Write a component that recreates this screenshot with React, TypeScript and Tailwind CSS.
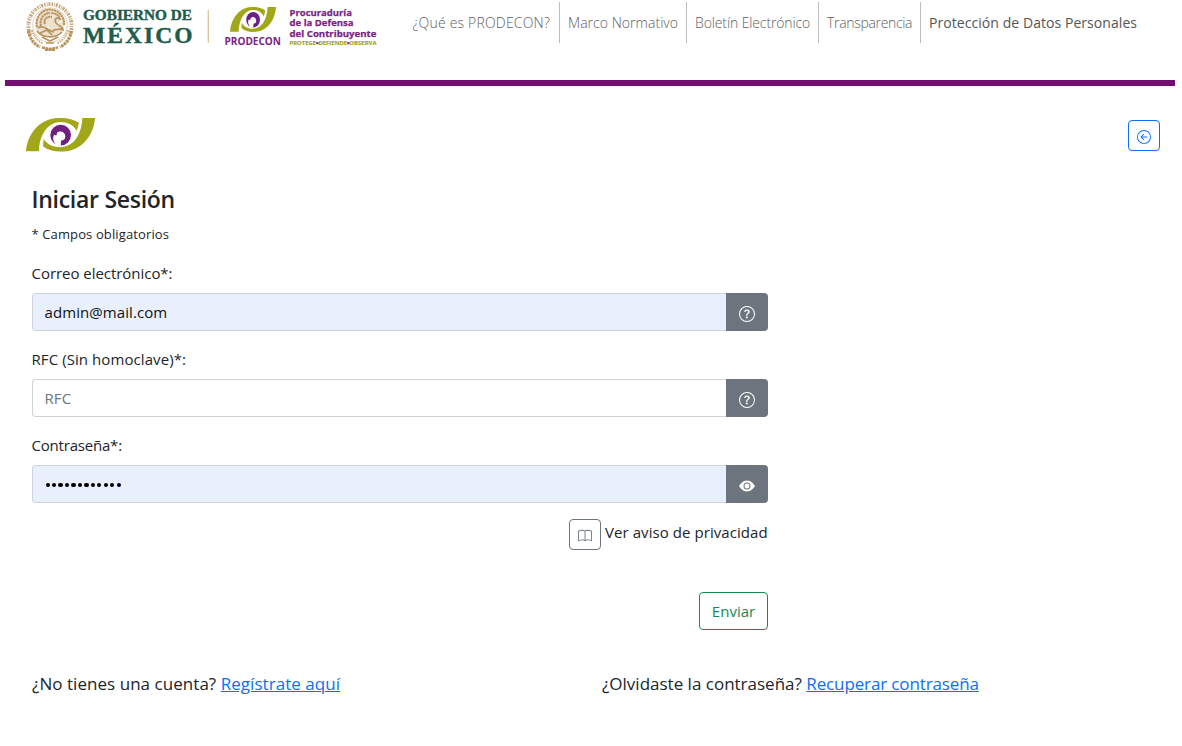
import React from "react";
import { BsArrowLeftCircle, BsBook, BsEyeFill, BsQuestionCircle } from "react-icons/bs";

function EyeMark({ className }: { className?: string }) {
  return (
    <svg viewBox="78 54 207 100" preserveAspectRatio="none" className={className}>
      <g fill="#a2a619">
        <path d="M78 153C80 125 92 96 117 75C137 59 158 54 182 54C205 54 222 59 237 68L230 93C222 76 203 65 180 66C140 68 118 108 117 153Z" />
        <path d="M247 54H285C283 86 268 115 246 133C227 148 206 154 182 154C161 154 143 149 129 138L131 116C140 132 158 141 180 141C222 141 245 102 247 54Z" />
      </g>
      <circle cx="182" cy="105" r="31" fill="#6f1f80" />
      <path d="M172 136C160 128 156 113 163 103C164 106 168 107 171 103C169 100 171 97 176 95C186 91 196 99 196 109C196 117 190 122 182 121L183 137Z" fill="#fff" />
      <path d="M172 119C176 123 180 121 183 121V128C178 128 173 124 172 119Z" fill="#fff" />
    </svg>
  );
}

function Seal() {
  return (
    <svg viewBox="0 0 50 50" className="absolute left-[25px] top-[1px] h-[50px] w-[50px]" fill="none" stroke="#b8925a">
      <path d="M5.5 34A21.6 21.6 0 1 1 44.5 34" strokeWidth="3.8" strokeDasharray="1.5 1.1 .8 .9 2 1.2" opacity=".8" />
      <path d="M3.5 30C5 38 9 43 15 46M46.500 30C45 38 41 43 35 46" strokeWidth="3.2" strokeDasharray="2.600 .7" />
      <path d="M7 29C9 36 13 40 18 42.500M43 29C41 36 37 40 32 42.500" strokeWidth="2" strokeDasharray="1.800 .8" opacity=".7" />
      <path d="M17 46.500L25 48L33 46.500M20 49H30" strokeWidth="2.400" strokeDasharray="3 .5" />
      <circle cx="25" cy="24" r="17.200" strokeWidth=".7" opacity=".6" />
      <path d="M10.500 27C9 17 14 9.500 23 8C33 7 40 14 40 23C39 31 34 36 27 36C18 37 12 34 10.500 27Z" fill="#d5bc91" stroke="none" opacity=".45" />
      <path d="M12 26C10 16 17 8.500 25 8.500C34 9 40 16 39 24M16 25C14 18 19 12 25 12M20 23C18 18 22 15 27 16" strokeWidth="2" strokeDasharray="2.400 .5" />
      <path d="M26 12C31 12 35 15 35 18C31 16 29 18 31 22C34 25 38 26 38 29C35 27 32 29 28 29M13 27C18 23 23 30 29 31M15 32L22 29L27 34M12 30C17 37 30 38 37 31M17 36L25 40L33 36M21 42H29" strokeWidth="1.700" />
      <path d="M27 15H29M33 22L37 20M22 26L25 27" stroke="#fff" strokeWidth="1.200" />
    </svg>
  );
}

function Brand() {
  return (
    <div className="relative h-[56px] w-[404px] shrink-0">
      <Seal />
      <svg viewBox="0 0 404 56" className="h-[56px] w-[404px]">
        <g fill="#1f5c4d" stroke="#1f5c4d" strokeWidth=".4" fontFamily="Liberation Serif, serif" fontWeight="700">
          <text x="83" y="20.3" fontSize="14.5" textLength="109" lengthAdjust="spacingAndGlyphs">GOBIERNO DE</text>
          <text x="83" y="43.2" fontSize="23.5" textLength="109.5" lengthAdjust="spacing">MÉXICO</text>
        </g>
        <path d="M208.3 10V43" stroke="#dcc398" strokeWidth="1.3" />
        <g fill="#7b2382" fontFamily="Open Sans, sans-serif" fontWeight="700">
          <text x="224.5" y="45" fontSize="10" textLength="56.5" lengthAdjust="spacingAndGlyphs">PRODECON</text>
          <g stroke="#7b2382" strokeWidth=".25">
            <text x="289.5" y="15.6" fontSize="9.6" textLength="62.5" lengthAdjust="spacingAndGlyphs">Procuraduría</text>
            <text x="289.5" y="26.4" fontSize="9.6" textLength="64" lengthAdjust="spacingAndGlyphs">de la Defensa</text>
            <text x="289.5" y="37.2" fontSize="9.6" textLength="87" lengthAdjust="spacingAndGlyphs">del Contribuyente</text>
          </g>
        </g>
        <text x="289.5" y="45.4" fontSize="5.6" fontFamily="Open Sans, sans-serif" fontWeight="700" fill="#a2a619" stroke="#a2a619" strokeWidth=".15" textLength="87" lengthAdjust="spacingAndGlyphs">
          PROTEGE<tspan fill="#7b2382" stroke="#7b2382" strokeWidth=".7">•</tspan>DEFIENDE<tspan fill="#7b2382" stroke="#7b2382" strokeWidth=".7">•</tspan>OBSERVA
        </text>
      </svg>
      <EyeMark className="absolute left-[230px] top-[7px] h-[25px] w-[46px]" />
    </div>
  );
}

function NavItem({ className, children }: { className: string; children: React.ReactNode }) {
  return (
    <a className={`flex h-[41px] shrink-0 items-center whitespace-nowrap pl-2 ${className}`}>
      {children}
    </a>
  );
}

const light = "border-r border-[#bdbdbd] font-light text-[#606060]";

interface FieldProps {
  label: string;
  value: React.ReactNode;
  addon: React.ReactNode;
  filled?: boolean;
  labelClass?: string;
}

function Field({ label, value, addon, filled, labelClass = "" }: FieldProps) {
  return (
    <div className="mb-4 w-[736px]">
      <div className={`-ml-[0.5px] mb-2 h-6 text-[15px] leading-6 ${labelClass}`}>{label}</div>
      <div className="flex h-[38px]">
        <div className={`flex grow items-center rounded-l border border-r-0 border-[#ced4da] pl-[11.500px] text-[15px] tracking-[0.08px] ${filled ? "bg-[#e8f0fe] text-[#111]" : "bg-white text-[#6c757d]"}`}>
          {value}
        </div>
        <div className="flex w-[42px] items-center justify-center rounded-r bg-[#6c757d] pt-1 text-white">{addon}</div>
      </div>
    </div>
  );
}

export default function App() {
  return (
    <div className="h-[746px] w-[1182px] overflow-hidden bg-white font-['Open_Sans',sans-serif] text-[#212529]">
      <header className="flex h-20">
        <Brand />
        <nav className="flex pt-[2px] text-[14px]">
          <NavItem className={`w-[156px] pl-[8.500px] tracking-[0.19px] ${light}`}>¿Qué es PRODECON?</NavItem>
          <NavItem className={`w-[127px] tracking-[0.04px] ${light}`}>Marco Normativo</NavItem>
          <NavItem className={`w-[132px] tracking-[-0.12px] ${light}`}>Boletín Electrónico</NavItem>
          <NavItem className={`w-[102px] tracking-[-0.32px] ${light}`}>Transparencia</NavItem>
          <NavItem className="w-[230px] tracking-[0.06px] text-[#555]">Protección de Datos Personales</NavItem>
        </nav>
      </header>
      <div className="ml-[5px] h-[6px] w-[1170px] bg-[#730f73]" />
      <div className="flex h-[97px] items-start justify-between pl-[26px] pr-[22px] pt-8">
        <EyeMark className="h-[33.500px] w-[69px]" />
        <button className="mt-[2px] flex h-[31px] w-8 items-center justify-center rounded border border-[#0d6efd] pt-[3px] text-[#0d6efd]">
          <BsArrowLeftCircle size={14} />
        </button>
      </div>
      <main className="pl-8">
        <h1 className="-ml-[0.5px] h-8 text-[23px] font-semibold leading-8 tracking-[-0.28px]">Iniciar Sesión</h1>
        <p className="-ml-[0.5px] mt-[9px] h-[21px] text-[13px] leading-[21px] tracking-[0.12px]">* Campos obligatorios</p>
        <div className="mt-4">
          <Field label="Correo electrónico*:" labelClass="tracking-[-0.04px]" value="admin@mail.com" filled addon={<BsQuestionCircle size={16} />} />
          <Field label="RFC (Sin homoclave)*:" labelClass="tracking-[0.08px]" value="RFC" addon={<BsQuestionCircle size={16} />} />
          <Field
            label="Contraseña*:"
            labelClass="tracking-[-0.2px]"
            filled
            addon={<BsEyeFill size={16} />}
            value={
              <span className="flex gap-[2.4px] pl-[1px] pt-[2px]">
                {Array.from({ length: 12 }, (_, i) => (
                  <i key={i} className="size-[4.1px] rounded-full bg-black" />
                ))}
              </span>
            }
          />
        </div>
        <div className="flex w-[736px] justify-end">
          <button className="flex h-[31px] w-8 items-center justify-center rounded border border-[#6c757d] pt-[3px] text-[#6c757d]">
            <BsBook size={14} />
          </button>
          <span className="ml-1 w-[163px] whitespace-nowrap text-[15px] leading-[27px] tracking-[0.07px]">Ver aviso de privacidad</span>
        </div>
        <div className="mt-[42px] flex w-[736px] justify-end">
          <button className="h-[38px] w-[69px] rounded border border-[#198754] text-[15px] text-[#198754]">Enviar</button>
        </div>
        <div className="mt-10 flex text-[17px] leading-7">
          <p className="w-[570px] tracking-[0.045px]">¿No tienes una cuenta? <a className="text-[#0d6efd] underline">Regístrate aquí</a></p>
          <p>¿Olvidaste la contraseña? <a className="tracking-[-0.13px] text-[#0d6efd] underline">Recuperar contraseña</a></p>
        </div>
      </main>
    </div>
  );
}
